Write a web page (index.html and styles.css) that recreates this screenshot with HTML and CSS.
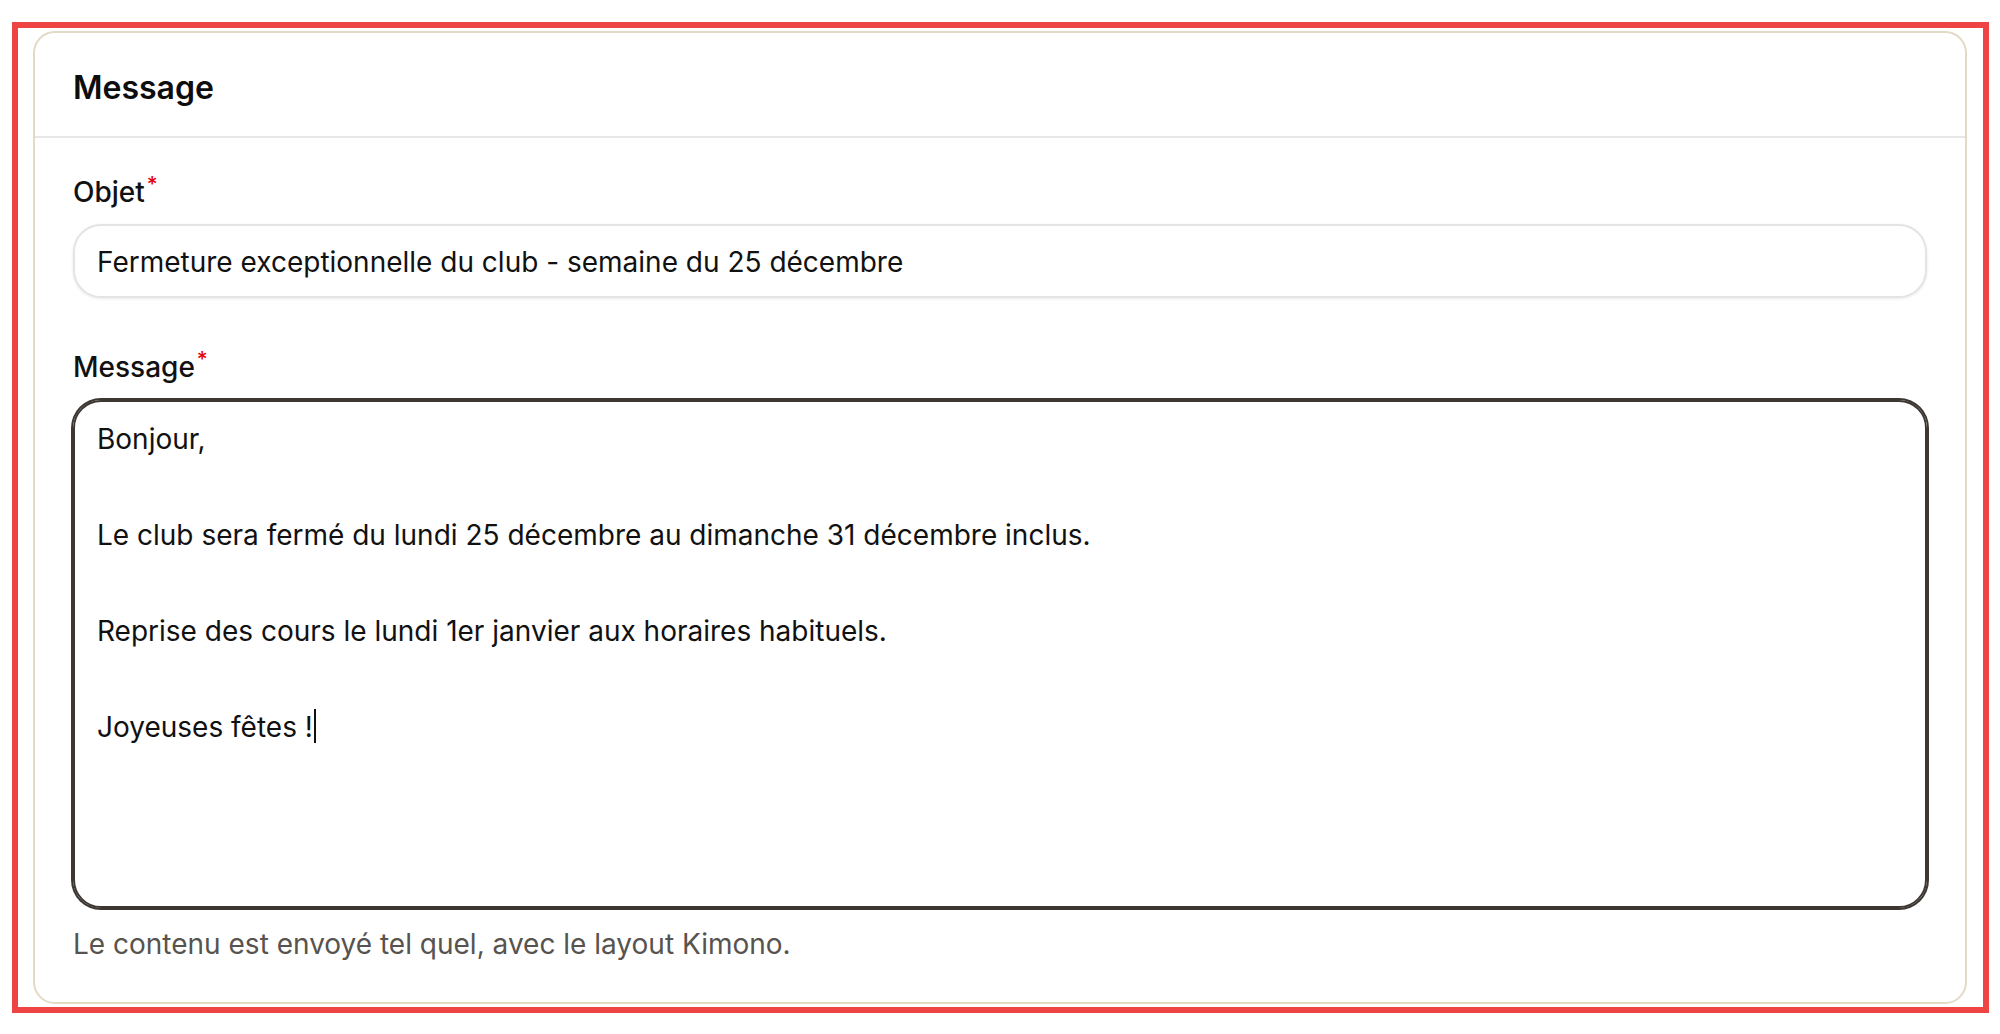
FILE: index.html
```html
<!DOCTYPE html>
<html lang="fr">
<head>
<meta charset="utf-8">
<title>Message</title>
<link rel="stylesheet" href="styles.css">
</head>
<body>
<div class="frame">
  <section class="card">
    <header class="card-header">
      <h2 class="card-title">Message</h2>
    </header>
    <div class="card-body">
      <div class="field">
        <label class="label" for="objet">Objet<span class="req">*</span></label>
        <input class="input" id="objet" type="text" value="Fermeture exceptionnelle du club - semaine du 25 décembre">
      </div>
      <div class="field field-message">
        <label class="label" for="message">Message<span class="req">*</span></label>
        <div class="textarea" id="message" role="textbox" aria-multiline="true">Bonjour,

Le club sera fermé du lundi 25 décembre au dimanche 31 décembre inclus.

Reprise des cours le lundi 1er janvier aux horaires habituels.

Joyeuses fêtes !<span class="caret"></span></div>
        <p class="help">Le contenu est envoyé tel quel, avec le layout Kimono.</p>
      </div>
    </div>
  </section>
</div>
</body>
</html>
```
FILE: styles.css
```css
html, body {
  margin: 0;
  padding: 0;
  background: #ffffff;
}

body {
  font-family: Inter, "Noto Sans", "Liberation Sans", sans-serif;
  color: #111111;
}

.frame {
  margin: 22px 11px 0 12px;
  border: 6px solid #ef4444;
  padding: 3px 16px 3px 15px;
}

.card {
  border: 2px solid #e3dac6;
  border-radius: 22px;
  background: #ffffff;
}

.card-header {
  padding: 35px 38px 28px;
  border-bottom: 2px solid #e7e7e7;
}

.card-title {
  margin: 0;
  font-size: 32px;
  line-height: 40px;
  font-weight: 600;
  color: #0d0d0d;
}

.card-body {
  padding: 34.5px 38px 38px;
}

.field-message {
  margin-top: 50.5px;
}

.label {
  display: block;
  font-size: 28px;
  line-height: 38.4px;
  font-weight: 500;
  color: #111111;
  margin-bottom: 13px;
}

.req {
  position: relative;
  top: -10px;
  margin-left: 2px;
  font-size: 21px;
  line-height: 0;
  font-weight: 500;
  color: #e7000b;
}

.input {
  display: block;
  box-sizing: border-box;
  width: 100%;
  height: 74px;
  margin: 0;
  padding: 2px 22px 0;
  border: 2px solid #e4e4e4;
  border-radius: 28px;
  background: #ffffff;
  box-shadow: 0 1px 3px rgba(0, 0, 0, 0.09);
  font-family: inherit;
  font-size: 28px;
  color: #111111;
  outline: none;
}

.textarea {
  box-sizing: border-box;
  height: 508px;
  padding: 13px 22px;
  border: 2px solid #3c3731;
  border-radius: 28px;
  box-shadow: 0 0 0 2px #3c3731;
  font-size: 28px;
  line-height: 48px;
  color: #111111;
  white-space: pre-wrap;
  overflow: hidden;
}

.caret {
  display: inline-block;
  width: 2px;
  height: 33.5px;
  margin-left: 1px;
  background: #111111;
  vertical-align: -6px;
}

.help {
  margin: 17.5px 0 0;
  font-size: 28px;
  line-height: 38.4px;
  color: #57534e;
}
```
